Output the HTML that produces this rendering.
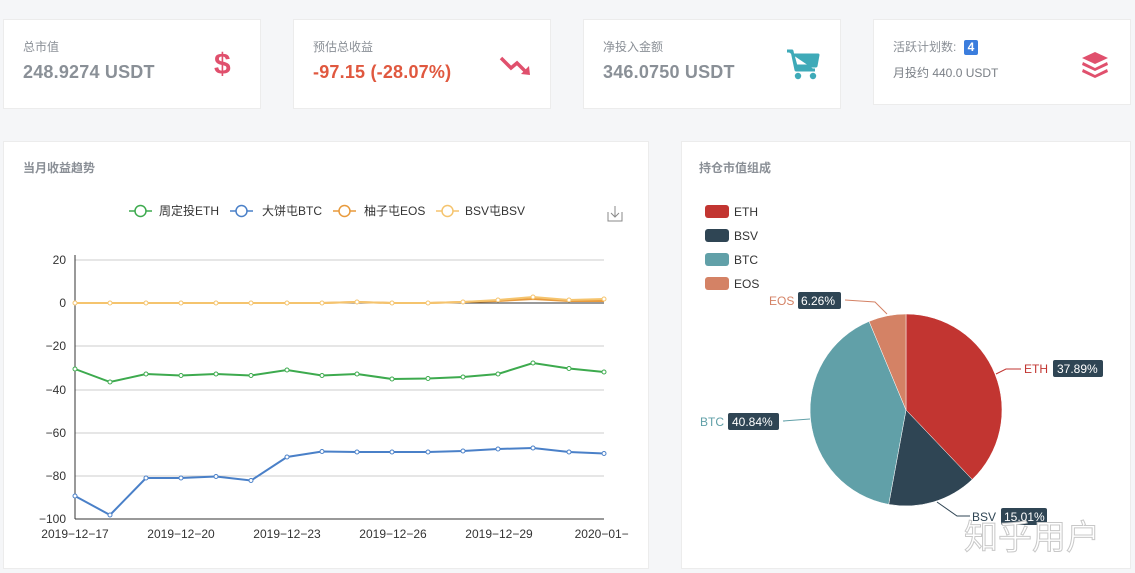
<!DOCTYPE html>
<html><head><meta charset="utf-8"><style>
*{margin:0;padding:0;box-sizing:border-box}
body{width:1135px;height:573px;background:#f5f6f8;font-family:"Liberation Sans","Noto Sans CJK SC",sans-serif;position:relative;overflow:hidden}
.card{position:absolute;background:#fff;border:1px solid #ececec}
.lbl{position:absolute;font-size:12px;color:#8a8f96}
.val{position:absolute;font-size:18px;font-weight:bold;color:#8a9097;letter-spacing:0.2px}
</style></head><body>
<div class="card" style="left:3px;top:19px;width:258px;height:90px">
 <div class="lbl" style="left:19px;top:18px">总市值</div>
 <div class="val" style="left:19px;top:42px">248.9274 USDT</div>
 <div style="position:absolute;left:210px;top:28px;font-size:30px;font-weight:bold;color:#e0506d">$</div>
</div>
<div class="card" style="left:293px;top:19px;width:258px;height:90px">
 <div class="lbl" style="left:19px;top:18px">预估总收益</div>
 <div class="val" style="left:19px;top:42px;color:#e0583f">-97.15 (-28.07%)</div>
 <svg style="position:absolute;left:205px;top:34px" width="34" height="26"><path d="M2 4 L12 14 L18 9 L28 19" stroke="#e0506d" stroke-width="3.5" fill="none"/><path d="M22 20 L31 21 L30 12 Z" fill="#e0506d"/></svg>
</div>
<div class="card" style="left:583px;top:19px;width:258px;height:90px">
 <div class="lbl" style="left:19px;top:18px">净投入金额</div>
 <div class="val" style="left:19px;top:42px">346.0750 USDT</div>
 <svg style="position:absolute;left:201px;top:28px" width="36" height="34"><path d="M2 3 L7 3 L11 22 L30 22 M8 7 L33 7 L31 18 L11 18 Z" fill="#3eaab8" stroke="#3eaab8" stroke-width="3" stroke-linejoin="round"/><circle cx="13" cy="28" r="3.2" fill="#3eaab8"/><circle cx="28" cy="28" r="3.2" fill="#3eaab8"/></svg>
</div>
<div class="card" style="left:873px;top:19px;width:258px;height:86px">
 <div class="lbl" style="left:19px;top:18px">活跃计划数: <span style="display:inline-block;background:#3b7ddd;color:#fff;font-size:12px;font-weight:bold;padding:1px 4px;border-radius:2px;margin-left:4px;line-height:13px">4</span></div>
 <div class="lbl" style="left:19px;top:44px;color:#7a7f86">月投约 440.0 USDT</div>
 <svg style="position:absolute;left:205px;top:30px" width="32" height="30"><path d="M16 2 L29 8 L16 14 L3 8 Z" fill="#e0506d"/><path d="M4 12 L16 18 L28 12 L29 15 L16 21 L3 15Z" fill="#e0506d"/><path d="M4 19 L16 25 L28 19 L29 22 L16 28 L3 22Z" fill="#e0506d"/></svg>
</div>

<div class="card" style="left:3px;top:141px;width:646px;height:428px">
 <div style="position:absolute;left:19px;top:17px;font-size:12px;font-weight:bold;color:#8a8f96">当月收益趋势</div>
</div>
<svg style="position:absolute;left:0;top:0" width="660" height="573" font-family="Liberation Sans,Noto Sans CJK SC,sans-serif" font-size="12">
 <defs><clipPath id="c"><rect x="0" y="0" width="629" height="573"/></clipPath></defs>
 <g stroke="#ccc" stroke-width="1">
  <line x1="75" y1="260" x2="604" y2="260"/><line x1="75" y1="346" x2="604" y2="346"/><line x1="75" y1="390" x2="604" y2="390"/><line x1="75" y1="433" x2="604" y2="433"/><line x1="75" y1="476" x2="604" y2="476"/>
 </g>
 <line x1="75" y1="303" x2="604" y2="303" stroke="#333"/>
 <line x1="75" y1="519" x2="604" y2="519" stroke="#333"/>
 <line x1="75" y1="255" x2="75" y2="519" stroke="#333"/>
 <g fill="#333" text-anchor="end"><text x="66" y="264">20</text><text x="66" y="307">0</text><text x="66" y="350">−20</text><text x="66" y="394">−40</text><text x="66" y="437">−60</text><text x="66" y="480">−80</text><text x="66" y="523">−100</text></g>
 <g fill="#333" text-anchor="middle" clip-path="url(#c)"><text x="75" y="538">2019−12−17</text><text x="181" y="538">2019−12−20</text><text x="287" y="538">2019−12−23</text><text x="393" y="538">2019−12−26</text><text x="499" y="538">2019−12−29</text><text x="605" y="538">2020−01−0</text></g>
 <polyline fill="none" stroke="#e89a3c" stroke-width="2" points="75,303 110,303 146,303 181,303 216,303 251,303 287,303 322,303 357,302 392,303 428,303 463,302 498,301 533,299 569,301 604,301"/>
 <polyline fill="none" stroke="#f5c46e" stroke-width="2" points="75,303 110,303 146,303 181,303 216,303 251,303 287,303 322,303 357,302 392,303 428,303 463,302 498,300 533,297 569,300 604,299"/>
 <polyline fill="none" stroke="#3daa4e" stroke-width="2" points="75,369 110,382 146,374 181,375.5 216,374 251,375.5 287,370 322,375.5 357,374 392,379 428,378.5 463,377 498,374 533,363 569,368.5 604,372"/>
 <polyline fill="none" stroke="#4a80c8" stroke-width="2" points="75,496 110,515 146,478 181,478 216,476.5 251,480.5 287,457 322,451.5 357,452 392,452 428,452 463,451 498,449 533,448 569,452 604,453.5"/>
 <g fill="#fff" stroke-width="1">
  <g stroke="#f5c46e"><circle cx="75" cy="303" r="2"/><circle cx="110" cy="303" r="2"/><circle cx="146" cy="303" r="2"/><circle cx="181" cy="303" r="2"/><circle cx="216" cy="303" r="2"/><circle cx="251" cy="303" r="2"/><circle cx="287" cy="303" r="2"/><circle cx="322" cy="303" r="2"/><circle cx="357" cy="302" r="2"/><circle cx="392" cy="303" r="2"/><circle cx="428" cy="303" r="2"/><circle cx="463" cy="302" r="2"/><circle cx="498" cy="300" r="2"/><circle cx="533" cy="297" r="2"/><circle cx="569" cy="300" r="2"/><circle cx="604" cy="299" r="2"/></g>
  <g stroke="#3daa4e"><circle cx="75" cy="369" r="2"/><circle cx="110" cy="382" r="2"/><circle cx="146" cy="374" r="2"/><circle cx="181" cy="375.5" r="2"/><circle cx="216" cy="374" r="2"/><circle cx="251" cy="375.5" r="2"/><circle cx="287" cy="370" r="2"/><circle cx="322" cy="375.5" r="2"/><circle cx="357" cy="374" r="2"/><circle cx="392" cy="379" r="2"/><circle cx="428" cy="378.5" r="2"/><circle cx="463" cy="377" r="2"/><circle cx="498" cy="374" r="2"/><circle cx="533" cy="363" r="2"/><circle cx="569" cy="368.5" r="2"/><circle cx="604" cy="372" r="2"/></g>
  <g stroke="#4a80c8"><circle cx="75" cy="496" r="2"/><circle cx="110" cy="515" r="2"/><circle cx="146" cy="478" r="2"/><circle cx="181" cy="478" r="2"/><circle cx="216" cy="476.5" r="2"/><circle cx="251" cy="480.5" r="2"/><circle cx="287" cy="457" r="2"/><circle cx="322" cy="451.5" r="2"/><circle cx="357" cy="452" r="2"/><circle cx="392" cy="452" r="2"/><circle cx="428" cy="452" r="2"/><circle cx="463" cy="451" r="2"/><circle cx="498" cy="449" r="2"/><circle cx="533" cy="448" r="2"/><circle cx="569" cy="452" r="2"/><circle cx="604" cy="453.5" r="2"/></g>
 </g>
 <g stroke-width="1.5" fill="#fff">
  <line x1="129" y1="211" x2="152" y2="211" stroke="#3daa4e"/><circle cx="140.5" cy="211" r="5.5" stroke="#3daa4e"/>
  <line x1="230" y1="211" x2="253" y2="211" stroke="#4a80c8"/><circle cx="241.5" cy="211" r="5.5" stroke="#4a80c8"/>
  <line x1="333" y1="211" x2="356" y2="211" stroke="#e89a3c"/><circle cx="344.5" cy="211" r="5.5" stroke="#e89a3c"/>
  <line x1="436" y1="211" x2="459" y2="211" stroke="#f5c46e"/><circle cx="447.5" cy="211" r="5.5" stroke="#f5c46e"/>
 </g>
 <g fill="#333"><text x="159" y="215">周定投ETH</text><text x="262" y="215">大饼屯BTC</text><text x="364" y="215">柚子屯EOS</text><text x="465" y="215">BSV屯BSV</text></g>
 <path d="M608 212 V221 H622 V212 M615 206 V217 M611 213 L615 217 L619 213" fill="none" stroke="#888" stroke-width="1"/>
</svg>

<div class="card" style="left:681px;top:141px;width:450px;height:428px">
 <div style="position:absolute;left:17px;top:17px;font-size:12px;font-weight:bold;color:#8a8f96">持仓市值组成</div>
</div>
<svg style="position:absolute;left:681px;top:141px" width="454" height="432" font-family="Liberation Sans,sans-serif" font-size="12">
 <g transform="translate(-681,-141)">
  <rect x="705" y="205" width="24" height="13" rx="3" fill="#c23531"/><text x="734" y="216" fill="#333">ETH</text>
  <rect x="705" y="229" width="24" height="13" rx="3" fill="#2f4554"/><text x="734" y="240" fill="#333">BSV</text>
  <rect x="705" y="253" width="24" height="13" rx="3" fill="#61a0a8"/><text x="734" y="264" fill="#333">BTC</text>
  <rect x="705" y="277" width="24" height="13" rx="3" fill="#d48265"/><text x="734" y="288" fill="#333">EOS</text>
  <path d="M906 410 L906 314 A96 96 0 0 1 972.2 479.5 Z" fill="#c23531" stroke="#fff" stroke-width="0.5"/>
  <path d="M906 410 L972.2 479.5 A96 96 0 0 1 888.7 504.4 Z" fill="#2f4554" stroke="#fff" stroke-width="0.5"/>
  <path d="M906 410 L888.7 504.4 A96 96 0 0 1 869.1 321.4 Z" fill="#61a0a8" stroke="#fff" stroke-width="0.5"/>
  <path d="M906 410 L869.1 321.4 A96 96 0 0 1 906 314 Z" fill="#d48265" stroke="#fff" stroke-width="0.5"/>
  <g fill="none" stroke-width="1">
   <path d="M996 374 L1006 369 L1021 369" stroke="#c23531"/>
   <path d="M937 502 L957 516 L970 516" stroke="#2f4554"/>
   <path d="M810 419 L783 421 L785 421" stroke="#61a0a8"/>
   <path d="M887 314 L875 302 L845 300" stroke="#d48265"/>
  </g>
  <text x="1024" y="373" fill="#c23531">ETH</text><rect x="1053" y="360" width="50" height="17" rx="2" fill="#2f4554"/><text x="1057" y="373" fill="#fff">37.89%</text>
  <text x="972" y="521" fill="#2f4554">BSV</text><rect x="1001" y="508" width="46" height="17" rx="2" fill="#2f4554"/><text x="1004" y="521" fill="#fff">15.01%</text>
  <text x="700" y="426" fill="#61a0a8">BTC</text><rect x="728" y="413" width="51" height="17" rx="2" fill="#2f4554"/><text x="732" y="426" fill="#fff">40.84%</text>
  <text x="769" y="305" fill="#d48265">EOS</text><rect x="798" y="292" width="43" height="17" rx="2" fill="#2f4554"/><text x="801" y="305" fill="#fff">6.26%</text>
  <text x="964" y="549" font-size="34" fill="#fff" stroke="#c8c8c8" stroke-width="1" font-family="Noto Sans CJK SC,sans-serif">知乎用户</text>
 </g>
</svg>
</body></html>
